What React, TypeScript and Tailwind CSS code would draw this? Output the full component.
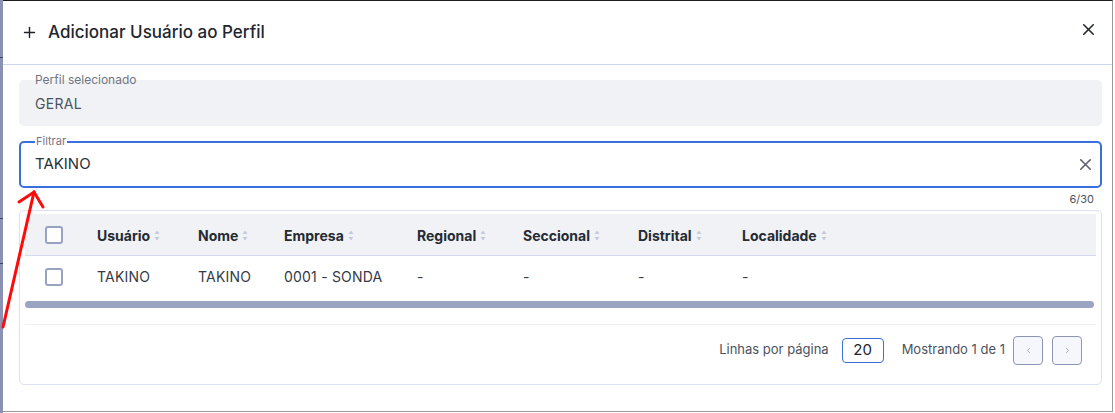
import { Plus, X, ChevronLeft, ChevronRight } from 'lucide-react'

const columns = [
  { label: '', width: 'w-[56px]' },
  { label: 'Usuário', width: 'w-[101px]' },
  { label: 'Nome', width: 'w-[86px]' },
  { label: 'Empresa', width: 'w-[133px]' },
  { label: 'Regional', width: 'w-[106px]' },
  { label: 'Seccional', width: 'w-[115px]' },
  { label: 'Distrital', width: 'w-[104px]' },
  { label: 'Localidade', width: 'flex-1' },
]

const rows = [['TAKINO', 'TAKINO', '0001 - SONDA', '-', '-', '-', '-']]

function SortIcon() {
  return (
    <svg width="6" height="11" viewBox="0 0 6 11" className="ml-[4px] shrink-0">
      <path d="M3 0.5 L5.5 4 H0.5 Z" fill="#c3c9dc" />
      <path d="M3 10.5 L5.5 7 H0.5 Z" fill="#c3c9dc" />
    </svg>
  )
}

function Checkbox() {
  return <div className="w-[18px] h-[18px] rounded-[3px] border-2 border-[#9aa2c2] bg-white" />
}

export default function App() {
  return (
    <div
      className="relative w-[1115px] h-[413px] bg-white flex overflow-hidden"
      style={{ fontFamily: 'Inter, "Noto Sans", sans-serif' }}
    >
      {/* backdrop edge behind the dialog */}
      <div className="w-[3px] h-full bg-[#8a91b3] flex flex-col">
        <div className="h-[57px]" />
        <div className="h-px bg-[#3d4466]" />
        <div className="h-[160px]" />
        <div className="h-px bg-[#3d4466]" />
        <div className="h-[44px]" />
        <div className="h-px bg-[#3d4466]" />
      </div>

      <div className="w-[1110px] h-[412px] bg-white border-t border-t-[#1c1c1c] border-r border-b border-r-[#9b9b9b] border-b-[#9b9b9b] flex flex-col">
        {/* header */}
        <div className="h-[64px] shrink-0 border-b border-[#cdd6ee] flex items-center pl-[18px] pr-[14px]">
          <Plus size={17} strokeWidth={2} className="text-[#1f2328]" />
          <span className="ml-[10px] text-[17px] font-medium text-[#22262e]">Adicionar Usuário ao Perfil</span>
          <X size={19} strokeWidth={2} className="ml-auto mt-[-7px] text-[#22262e]" />
        </div>

        {/* body */}
        <div className="pl-[16px] pr-[10px] pt-[15px] flex flex-col">
          <div className="relative h-[46px] rounded-[5px] bg-[#f0f2f5] px-[16px] flex items-center pt-[1px]">
            <span className="absolute left-[16px] top-[-7px] text-[12px] leading-[14px] text-[#70757f]">Perfil selecionado</span>
            <span className="text-[14px] text-[#4b5260] tracking-[0.3px]">GERAL</span>
          </div>

          <div className="relative mt-[15px] h-[47px] rounded-[5px] border-2 border-[#3a6fe0] bg-white pl-[14px] pr-[5px] flex items-center">
            <span className="absolute left-[14px] top-[-8px] px-[1px] bg-white text-[11px] leading-[13px] text-[#7a6f86]">Filtrar</span>
            <span className="text-[15px] text-[#2b2f36]">TAKINO</span>
            <X size={19} strokeWidth={2} className="ml-auto text-[#5a6070]" />
          </div>

          <div className="h-[22px] flex items-center justify-end pr-[8px] text-[11px] text-[#4b5260]">6/30</div>

          {/* table */}
          <div className="h-[175px] rounded-[5px] border border-[#dbe1f1] px-[5px] pt-[3px] flex flex-col">
            <div className="h-[42px] bg-[#f0f2f6] border-b border-[#d3daee] flex items-center pt-[1px]">
              {columns.map((c, i) => (
                <div key={i} className={`${c.width} flex items-center ${i === 0 ? 'pl-[20px]' : 'pl-[16px]'}`}>
                  {i === 0 ? (
                    <Checkbox />
                  ) : (
                    <>
                      <span className="text-[14px] font-bold text-[#252a33]">{c.label}</span>
                      <SortIcon />
                    </>
                  )}
                </div>
              ))}
            </div>

            {rows.map((r, ri) => (
              <div key={ri} className="h-[40px] flex items-center pt-[1px]">
                <div className="w-[56px] pl-[20px] flex items-center">
                  <Checkbox />
                </div>
                {r.map((v, ci) => (
                  <div key={ci} className={`${columns[ci + 1].width} pl-[16px] text-[14px] tracking-[0.2px] text-[#353a44]`}>
                    {v}
                  </div>
                ))}
              </div>
            ))}

            {/* horizontal scrollbar */}
            <div className="mt-[5px] h-[7px] mr-[2px] rounded-full bg-[#9ba4c2]" />

            <div className="mt-[16px] h-px bg-[#eef0f5]" />

            <div className="flex-1 flex items-center justify-end pr-[14px] pb-[9px]">
              <span className="text-[13px] text-[#4b5260]">Linhas por página</span>
              <div className="ml-[13px] w-[42px] h-[25px] rounded-[4px] border border-[#3a6fe0] flex items-center justify-center text-[15px] text-[#22262e]">
                20
              </div>
              <span className="ml-[18px] text-[13px] text-[#4b5260]">Mostrando 1 de 1</span>
              <button className="ml-[8px] w-[30px] h-[29px] rounded-[4px] border border-[#8e96b4] bg-[#f5f7fc] flex items-center justify-center">
                <ChevronLeft size={9} strokeWidth={2} className="text-[#8a90a6]" />
              </button>
              <button className="ml-[9px] w-[30px] h-[29px] rounded-[4px] border border-[#8e96b4] bg-[#f5f7fc] flex items-center justify-center">
                <ChevronRight size={9} strokeWidth={2} className="text-[#8a90a6]" />
              </button>
            </div>
          </div>
        </div>
      </div>

      {/* red pointer arrow drawn on top */}
      <svg className="absolute left-0 top-0 pointer-events-none" width="1115" height="413">
        <g stroke="#ff0a0a" strokeWidth="3" strokeLinecap="round" fill="none">
          <path d="M3 327 L34 192" />
          <path d="M19 202 L34 192 L43 207" strokeLinejoin="miter" />
        </g>
      </svg>
    </div>
  )
}
